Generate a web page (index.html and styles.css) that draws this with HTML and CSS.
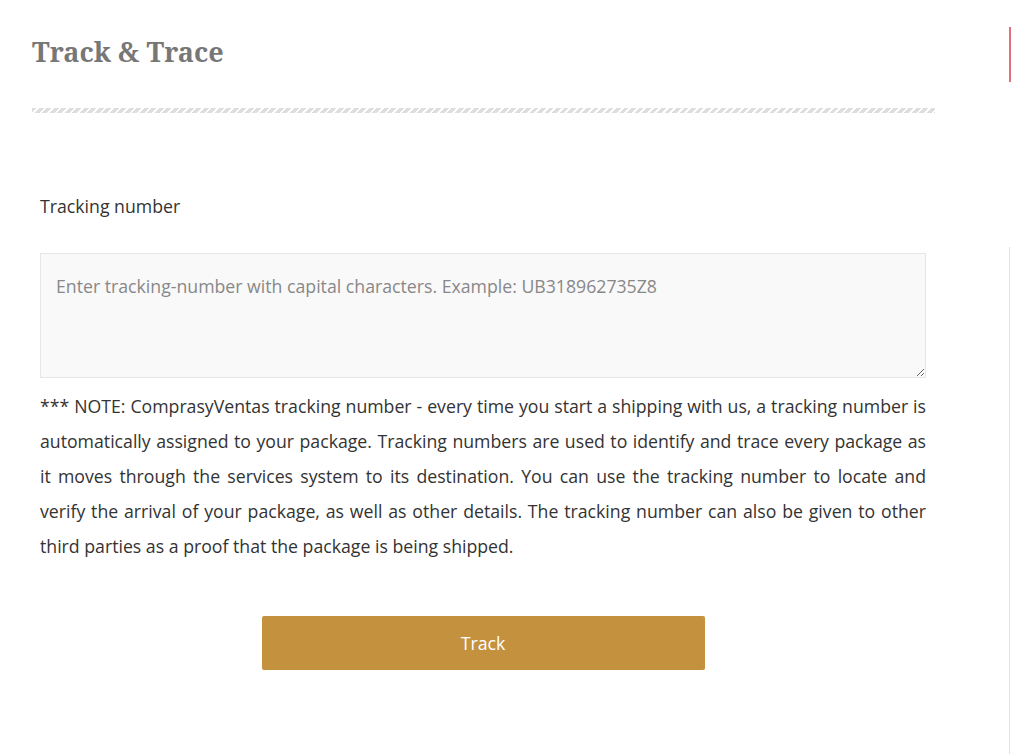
FILE: index.html
```html
<!DOCTYPE html>
<html lang="en">
<head>
<meta charset="utf-8">
<title>Track &amp; Trace</title>
<link rel="stylesheet" href="styles.css">
</head>
<body>
<div class="page">
  <main class="main">
    <h1 class="title">Track &amp; Trace</h1>
    <div class="divider"></div>
    <form class="track-form">
      <label class="label" for="tn">Tracking number</label>
      <textarea id="tn" class="input" placeholder="Enter tracking-number with capital characters. Example: UB318962735Z8"></textarea>
      <p class="note">*** NOTE: ComprasyVentas tracking number - every time you start a shipping with us, a tracking number is automatically assigned to your package. Tracking numbers are used to identify and trace every package as it moves through the services system to its destination. You can use the tracking number to locate and verify the arrival of your package, as well as other details. The tracking number can also be given to other third parties as a proof that the package is being shipped.</p>
      <div class="actions">
        <button type="button" class="btn">Track</button>
      </div>
    </form>
  </main>
  <aside class="aside">
    <div class="aside-accent"></div>
    <div class="aside-panel"></div>
  </aside>
</div>
</body>
</html>
```
FILE: styles.css
```css
html, body {
  margin: 0;
  padding: 0;
  background: #fff;
}
body {
  font-family: "Open Sans", "Noto Sans", sans-serif;
  color: #333;
  height: 754px;
  overflow: hidden;
}
.page {
  display: flex;
  height: 754px;
}
.main {
  width: 1009px;
  flex: none;
  padding: 36px 0 0 32px;
  box-sizing: border-box;
}
.title {
  margin: 0;
  font-family: "Noto Serif", "DejaVu Serif", serif;
  font-weight: 700;
  font-size: 27px;
  line-height: 32px;
  color: #777;
}
.divider {
  margin-top: 40px;
  width: 903px;
  height: 5px;
  background: repeating-linear-gradient(135deg, #dedede 0 3.4px, transparent 3.4px 5.3px);
}
.track-form {
  padding: 81px 0 0 8px;
  width: 886px;
}
.label {
  display: block;
  font-size: 17.7px;
  line-height: 24px;
  color: #333;
}
.input {
  display: block;
  margin-top: 35px;
  width: 886px;
  height: 125px;
  box-sizing: border-box;
  padding: 20px 15px;
  background: #f9f9f9;
  border: 1px solid #e6e6e6;
  border-radius: 0;
  font-family: "Open Sans", "Noto Sans", sans-serif;
  font-size: 17.7px;
  line-height: 24px;
  color: #333;
  outline: none;
}
.input::placeholder {
  color: #888;
}
.note {
  margin: 11px 0 0;
  font-size: 17.7px;
  line-height: 35px;
  text-align: justify;
  color: #333;
}
.actions {
  display: flex;
  justify-content: center;
  margin-top: 52px;
}
.btn {
  width: 443px;
  height: 54px;
  border: 0;
  border-radius: 2px;
  background: #c4913f;
  color: #fff;
  font-family: "Open Sans", "Noto Sans", sans-serif;
  font-size: 17.7px;
  cursor: pointer;
}
.aside {
  flex: none;
  width: 2px;
  display: flex;
  flex-direction: column;
}
.aside-accent {
  margin-top: 27px;
  height: 55px;
  width: 2px;
  background: #e2707c;
}
.aside-panel {
  margin-top: 165px;
  flex: 1;
  border-left: 1px solid #e2e2e2;
  background: #fcfcfc;
}
```
